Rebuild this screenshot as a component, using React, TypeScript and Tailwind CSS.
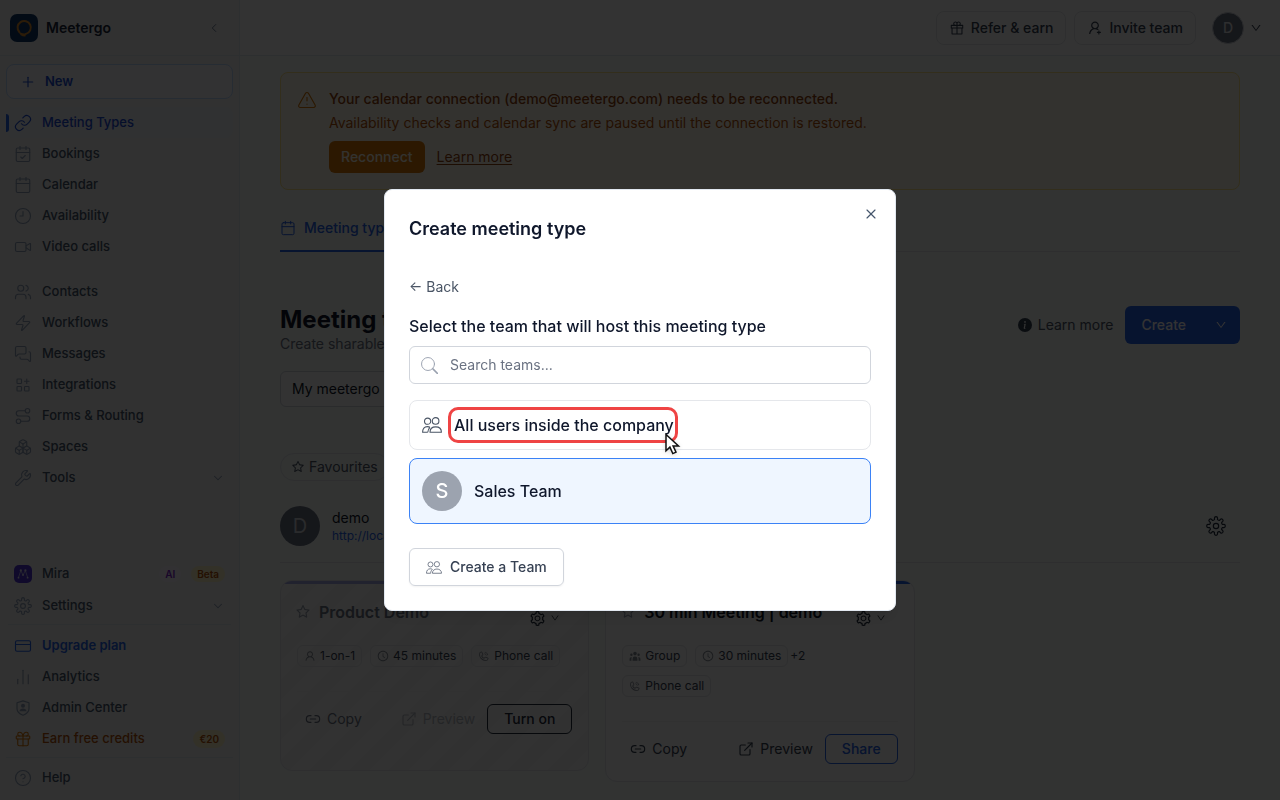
import type { ComponentType, ReactNode } from "react";
import {
  Boxes,
  Calendar,
  CalendarCheck,
  ChartNoAxesColumn,
  ChevronDown,
  ChevronLeft,
  CircleHelp,
  Clock9,
  CreditCard,
  ExternalLink,
  Gift,
  Link,
  Link2,
  MessagesSquare,
  Plus,
  Route,
  TriangleAlert,
  Users,
  Video,
  Wrench,
  X,
  Zap,
} from "lucide-react";
import {
  AiOutlineClockCircle,
  AiOutlineDown,
  AiOutlineGift,
  AiOutlineSetting,
  AiOutlineStar,
  AiOutlineUser,
  AiOutlineUserAdd,
} from "react-icons/ai";
import { BsInfoCircleFill } from "react-icons/bs";
import { HiUserGroup } from "react-icons/hi";
import { PiPhoneCall } from "react-icons/pi";
import { TbApps } from "react-icons/tb";

type IconType = ComponentType<{ className?: string; strokeWidth?: number }>;

function TeamIcon({ className }: { className: string }) {
  return (
    <svg viewBox="0 0 20 16" fill="none" stroke="currentColor" strokeWidth="1.1" className={className} aria-hidden="true">
      <circle cx="5.6" cy="4.2" r="3.1" />
      <circle cx="13.6" cy="3.9" r="3.3" />
      <path d="M8 15.2c0-3.2 2.300-5.300 5.700-5.300s5.700 2.100 5.700 5.300z" strokeLinejoin="round" />
      <path d="M5.800 15.200H.6c0-3.400 1.700-5.600 4.800-5.600 1 0 1.800.2 2.500.7M5.800 15.200c.1-1.800.7-3.400 2.100-4.900" strokeLinejoin="round" />
    </svg>
  );
}

function SearchIcon() {
  return (
    <svg viewBox="0 0 16 16" fill="none" stroke="currentColor" strokeLinecap="round" className="size-[17px]" aria-hidden="true">
      <circle cx="6.600" cy="6.600" r="6.100" strokeWidth="0.9" />
      <path d="M11.200 11.200l4.200 4.200" strokeWidth="1.400" />
    </svg>
  );
}

const cogOutline = Array.from({ length: 8 }, (_, i) => {
  const point = (radius: number, degrees: number) => {
    const a = ((i * 45 + degrees) * Math.PI) / 180;
    return `${(12 + radius * Math.sin(a)).toFixed(2)} ${(12 - radius * Math.cos(a)).toFixed(2)}`;
  };
  return `${i === 0 ? "M" : "L"}${point(8, -13)}L${point(9.8, -11)}Q${point(11.2, -9)} ${point(11.2, 0)}Q${point(11.2, 9)} ${point(9.8, 11)}L${point(8, 13)}Q${point(7, 22.5)} ${point(8, 32)}`;
}).join("");

function Cog({ className, strokeWidth = 1.5 }: { className?: string; strokeWidth?: number }) {
  return (
    <svg viewBox="0 0 24 24" fill="none" stroke="currentColor" strokeWidth={strokeWidth} strokeLinejoin="round" className={className} aria-hidden="true">
      <path d={`${cogOutline}Z`} />
      <circle cx="12" cy="12" r="3.2" />
    </svg>
  );
}

function ShieldUser({ className }: { className?: string }) {
  return (
    <svg viewBox="0 0 24 24" fill="none" stroke="currentColor" strokeWidth="1.500" className={className} aria-hidden="true">
      <path d="M12 2.500l8 2.500v8c0 4-3.300 6.800-8 8.800-4.700-2-8-4.800-8-8.800v-8z" strokeLinejoin="round" />
      <circle cx="12" cy="9" r="2.700" fill="currentColor" stroke="none" />
      <path d="M7.200 16.300c.5-2.500 2.300-3.600 4.800-3.600s4.300 1.100 4.800 3.600z" fill="currentColor" stroke="none" />
    </svg>
  );
}

function Logo() {
  return (
    <svg viewBox="0 0 28 28" className="size-7" aria-hidden="true">
      <rect width="28" height="28" rx="7" fill="#123a6b" />
      <path d="M9.300 18A6.600 6.600 0 1 1 16 19.900" fill="none" stroke="#d98a2b" strokeWidth="2" strokeLinecap="round" />
      <path d="M8.600 17c1.500 1.900 4 2.700 7.600 2.300l-.8 3.200c-3.600.2-6-1.600-6.800-5.500z" fill="#d98a2b" />
    </svg>
  );
}

function MiraIcon() {
  return (
    <svg viewBox="0 0 18 18" className="size-[18px]" aria-hidden="true">
      <rect width="18" height="18" rx="5" fill="#4f35d8" />
      <path d="M4.500 12.500l2.300-7 2.200 4.500 2.400-4.500 2.200 7" fill="none" stroke="#c7c2ee" strokeWidth="0.8" />
      <g fill="#e4e1f8">
        <circle cx="4.500" cy="12.700" r="0.9" />
        <circle cx="6.800" cy="5.400" r="1.100" />
        <circle cx="9" cy="10" r="0.9" />
        <circle cx="11.400" cy="5.400" r="1.100" />
        <circle cx="13.600" cy="12.700" r="0.9" />
      </g>
    </svg>
  );
}

function NavItem({ icon: Icon, label, tone = "text-slate-600", iconTone = "text-slate-400", children }: {
  icon: IconType;
  label: string;
  tone?: string;
  iconTone?: string;
  children?: ReactNode;
}) {
  return (
    <a href="#" className={`flex h-[31px] items-center gap-2.5 rounded-lg pr-2 pl-2 ${tone}`}>
      <span className={`flex w-[18px] justify-center ${iconTone}`}>
        <Icon className="size-[18px]" strokeWidth={1.5} />
      </span>
      <span className="flex-1 whitespace-nowrap">{label}</span>
      {children}
    </a>
  );
}

function Sidebar() {
  return (
    <aside className="flex w-60 shrink-0 flex-col border-r border-slate-200 bg-[#f3f3f4] text-[13px] font-medium">
      <div className="flex h-14 items-center gap-2 border-b border-slate-200 pr-[18px] pl-2.5">
        <Logo />
        <span className="flex-1 text-sm font-semibold text-slate-800">Meetergo</span>
        <button type="button" aria-label="Collapse" className="text-slate-500">
          <ChevronLeft className="size-3.5" strokeWidth={1.5} />
        </button>
      </div>
      <div className="flex flex-1 flex-col px-1.5 pb-[7px]">
        <button type="button" className="mt-2 flex h-[35px] w-full items-center gap-[9px] rounded-lg border border-[#bfdbfe] bg-slate-50 pl-[13px] font-semibold text-[#1d4ed8]">
          <Plus className="size-4" strokeWidth={1.75} />
          New
        </button>
        <nav className="mt-2">
          <div className="flex items-center rounded-lg bg-[#eef2f8]">
            <span className="z-10 -mr-[3px] h-[18px] w-[3px] rounded-r bg-[#2563eb]" />
            <div className="flex-1">
              <NavItem icon={Link} label="Meeting Types" tone="text-[#1d4ed8]" iconTone="text-[#1d4ed8]" />
            </div>
          </div>
          <NavItem icon={CalendarCheck} label="Bookings" />
          <NavItem icon={Calendar} label="Calendar" />
          <NavItem icon={Clock9} label="Availability" />
          <NavItem icon={Video} label="Video calls" />
        </nav>
        <nav className="mt-3.5 mb-6">
          <NavItem icon={Users} label="Contacts" />
          <NavItem icon={Zap} label="Workflows" />
          <NavItem icon={MessagesSquare} label="Messages" />
          <NavItem icon={TbApps} label="Integrations" />
          <NavItem icon={Route} label="Forms & Routing" />
          <NavItem icon={Boxes} label="Spaces" />
          <NavItem icon={Wrench} label="Tools">
            <ChevronDown className="size-3.5 text-slate-400" strokeWidth={1.75} />
          </NavItem>
        </nav>
        <nav className="mt-auto flex flex-col gap-px">
          <NavItem icon={MiraIcon} label="Mira">
            <span className="rounded-full bg-purple-50 px-1.5 text-[10px] leading-4 font-semibold text-[#7e22ce]">AI</span>
            <span className="rounded-full bg-[#fef3c7] px-1.5 text-[10px] leading-4 font-semibold text-[#b45309]">Beta</span>
          </NavItem>
          <NavItem icon={Cog} label="Settings">
            <ChevronDown className="size-3.5 text-slate-400" strokeWidth={1.75} />
          </NavItem>
        </nav>
        <hr className="mx-0.5 mt-[3px] mb-[5px] border-slate-200" />
        <nav>
          <NavItem icon={CreditCard} label="Upgrade plan" tone="text-[#2563eb] font-semibold" iconTone="text-[#2563eb]" />
          <NavItem icon={ChartNoAxesColumn} label="Analytics" />
          <NavItem icon={ShieldUser} label="Admin Center" />
          <NavItem icon={Gift} label="Earn free credits" tone="text-[#b45309]" iconTone="text-[#d97706]">
            <span className="rounded-full bg-[#fef3c7] px-1.5 text-[10px] leading-[18px] font-semibold text-[#b45309]">€20</span>
          </NavItem>
        </nav>
        <hr className="mt-[3px] mb-1 border-slate-200" />
        <NavItem icon={CircleHelp} label="Help" />
      </div>
    </aside>
  );
}

function Header() {
  return (
    <header className="flex h-14 shrink-0 items-center justify-end border-b border-slate-200 bg-white pr-[18px] text-sm font-medium text-gray-700">
      <button type="button" className="mr-2 flex h-[34px] items-center gap-1.5 rounded-lg border border-gray-200 px-3">
        <AiOutlineGift className="size-4" />
        Refer &amp; earn
      </button>
      <button type="button" className="mr-4 flex h-[34px] items-center gap-1.5 rounded-lg border border-gray-200 px-3">
        <AiOutlineUserAdd className="size-4" />
        Invite team
      </button>
      <button type="button" aria-label="Account" className="flex items-center gap-1.5">
        <span className="flex size-8 items-center justify-center rounded-full border border-gray-300 bg-gray-500 text-gray-200">D</span>
        <AiOutlineDown className="size-3" />
      </button>
    </header>
  );
}

function Chip({ icon: Icon, children }: { icon: IconType; children: ReactNode }) {
  return (
    <span className="flex h-[22px] items-center gap-1 rounded-md border border-gray-200 px-1.5 text-xs whitespace-nowrap">
      <Icon className="size-3 opacity-60" />
      {children}
    </span>
  );
}

function CardTitle({ title, tone, starTone }: { title: string; tone: string; starTone: string }) {
  return (
    <div className="flex h-14 items-center gap-2">
      <AiOutlineStar className={`-ml-0.5 size-4 ${starTone}`} />
      <h2 className={`flex-1 text-base font-semibold ${tone}`}>{title}</h2>
      <button type="button" aria-label="Card settings" className="mt-3 mr-3 flex items-center gap-1 text-gray-800">
        <AiOutlineSetting className="size-[17px]" />
        <AiOutlineDown className="size-2.5" />
      </button>
    </div>
  );
}

function Main() {
  return (
    <main className="flex-1 px-10 pt-4 pb-4 text-sm">
      <section className="flex gap-3 rounded-lg border border-[#fde68a] bg-[#fffbeb] px-4 pt-4 pb-4">
        <TriangleAlert className="mt-px size-5 text-[#d97706]" strokeWidth={1.4} />
        <div>
          <p className="font-medium leading-5 text-[#92400e]">Your calendar connection (demo@meetergo.com) needs to be reconnected.</p>
          <p className="mt-1 leading-5 text-[#b45309]">Availability checks and calendar sync are paused until the connection is restored.</p>
          <div className="mt-2 flex items-center gap-3">
            <button type="button" className="h-8 rounded-md bg-[#d97706] px-3 font-medium text-amber-50">Reconnect</button>
            <a href="#" className="text-[#92400e] underline underline-offset-2">Learn more</a>
          </div>
        </div>
      </section>

      <div className="mt-4 flex border-b border-gray-200">
        <button type="button" className="-mb-px flex h-[46px] items-center gap-2 border-b-2 border-[#2563eb] pr-3 font-medium text-[#2563eb]">
          <Calendar className="size-4" strokeWidth={1.5} />
          Meeting types
        </button>
      </div>

      <div className="mt-[54px] flex items-start justify-between">
        <div>
          <h1 className="text-2xl leading-7 font-bold text-gray-900">Meeting types</h1>
          <p className="leading-5 text-gray-500">Create sharable booking pages</p>
        </div>
        <div className="flex items-center gap-3">
          <a href="#" className="flex items-center gap-1.5 text-gray-600">
            <BsInfoCircleFill className="size-3.5 text-gray-700" />
            Learn more
          </a>
          <div className="flex h-[38px] items-center rounded-md bg-[#2563eb] font-medium text-white">
            <button type="button" className="h-full pr-4 pl-4">Create</button>
            <button type="button" aria-label="More create options" className="h-full px-[13px]">
              <AiOutlineDown className="size-3" />
            </button>
          </div>
        </div>
      </div>

      <button type="button" className="mt-[17px] flex h-9 w-56 items-center rounded-md border border-gray-300 bg-white px-[11px] text-gray-900">My meetergo</button>

      <button type="button" className="mt-[46px] flex h-7 items-center gap-1 rounded-full border border-gray-200 px-2.5 text-gray-600">
        <AiOutlineStar className="size-3.5" />
        Favourites
      </button>

      <div className="mt-[25px] flex items-center gap-3 border-b border-gray-200 pb-4">
        <span className="flex size-10 items-center justify-center rounded-full bg-gray-500 text-xl text-gray-300">D</span>
        <div className="flex-1">
          <p className="leading-5 text-gray-900">demo</p>
          <a href="#" className="block text-xs leading-4 text-[#2563eb]">http://localhost/demo</a>
        </div>
        <button type="button" aria-label="Profile settings" className="mr-3.5 text-gray-800">
          <Cog className="size-5" strokeWidth={1.4} />
        </button>
      </div>

      <div className="mt-[17px] grid grid-cols-3 items-start gap-4">
        <article className="relative min-h-[191px] overflow-hidden rounded-xl border border-gray-200 bg-[repeating-linear-gradient(135deg,#f9f9f9_0px,#f9f9f9_14px,#f5f5f5_14px,#f5f5f5_28px)] px-4 pt-[3px] text-gray-500">
          <div className="absolute inset-x-0 top-0 h-[3px] bg-[#a5a8e6]" />
          <CardTitle title="Product Demo" tone="text-gray-500" starTone="text-gray-400" />
          <div className="mt-[5px] flex flex-wrap gap-2 text-gray-700">
            <Chip icon={AiOutlineUser}>1-on-1</Chip>
            <Chip icon={AiOutlineClockCircle}>45 minutes</Chip>
            <Chip icon={PiPhoneCall}>Phone call</Chip>
          </div>
          <div className="mt-6 flex items-center border-t border-gray-100 pt-3">
            <button type="button" className="flex items-center gap-1.5 pl-2"><Link2 className="size-4" strokeWidth={1.75} />Copy</button>
            <button type="button" disabled className="mr-3 ml-auto flex items-center gap-1.5 text-[#b4b8c0]"><ExternalLink className="size-4" strokeWidth={1.75} />Preview</button>
            <button type="button" className="h-[30px] rounded-md border border-gray-800 px-4 font-medium text-gray-800">Turn on</button>
          </div>
        </article>

        <article className="relative overflow-hidden rounded-xl border border-gray-200 bg-[#fcfcfc] px-4 pt-[3px] pb-[17px] text-gray-700">
          <div className="absolute inset-x-0 top-0 h-[3px] bg-[#2563eb]" />
          <CardTitle title="30 min Meeting | demo" tone="text-gray-900" starTone="text-gray-400" />
          <div className="mt-[5px] flex flex-wrap items-center gap-2">
            <Chip icon={HiUserGroup}>Group</Chip>
            <span className="flex items-center gap-0.5 text-xs">
              <Chip icon={AiOutlineClockCircle}>30 minutes</Chip>
              +2
            </span>
            <span className="flex basis-full">
              <Chip icon={PiPhoneCall}>Phone call</Chip>
            </span>
          </div>
          <div className="mt-6 flex items-center border-t border-gray-100 pt-3">
            <button type="button" className="flex items-center gap-1.5 pl-2"><Link2 className="size-4" strokeWidth={1.75} />Copy</button>
            <button type="button" className="mr-3 ml-auto flex items-center gap-1.5"><ExternalLink className="size-4" strokeWidth={1.75} />Preview</button>
            <button type="button" className="h-[30px] rounded-md border border-[#2563eb] px-4 font-medium text-[#2563eb]">Share</button>
          </div>
        </article>
      </div>
    </main>
  );
}

function CreateDialog() {
  return (
    <div className="fixed inset-0 z-20 flex items-center justify-center bg-black/80">
      <div role="dialog" aria-modal="true" aria-labelledby="dialog-title" className="relative w-full max-w-lg rounded-lg border border-slate-200 bg-white p-6 text-slate-900 shadow-lg">
        <h2 id="dialog-title" className="pt-px text-lg leading-7 font-semibold">Create meeting type</h2>
        <button type="button" aria-label="Close" className="absolute top-4 right-4 text-slate-600">
          <X className="size-4" strokeWidth={1.75} />
        </button>
        <button type="button" className="mt-[34px] block text-sm leading-5 text-gray-600">← Back</button>
        <label htmlFor="team-search" className="mt-[17px] block text-base leading-6 font-medium">Select the team that will host this meeting type</label>
        <div className="mt-2 flex h-[38px] items-center gap-3 rounded-md border border-gray-300 px-[11px] text-gray-400">
          <SearchIcon />
          <input id="team-search" type="text" placeholder="Search teams..." className="min-w-0 flex-1 text-sm text-gray-900 outline-none placeholder:text-gray-500" />
        </div>
        <button type="button" className="mt-4 flex h-[50px] w-full items-center gap-3 rounded-lg border border-gray-200 px-3 text-left font-medium">
          <TeamIcon className="h-4 w-5 text-gray-600" />
          <span className="relative">
            All users inside the company
            <span className="absolute -inset-y-1.5 -right-1 -left-1.5 rounded-[10px] border-[3px] border-[#ef4444]" />
            <svg viewBox="0 0 18 24" className="absolute top-5 -right-2 h-6 w-[18px] drop-shadow-sm" aria-hidden="true">
              <path d="M2 1.500v16.300l3.900-3.700 2.900 6.500 3.200-1.400-2.900-6.300h5.400z" fill="#fff" stroke="#111" strokeWidth="1.500" />
            </svg>
          </span>
        </button>
        <button type="button" className="mt-2 flex h-[66px] w-full items-center gap-3 rounded-lg border border-[#3b82f6] bg-[#eff6ff] px-3 text-left font-medium">
          <span className="flex size-10 items-center justify-center rounded-full bg-[#9ca3af] text-xl text-white">S</span>
          Sales Team
        </button>
        <button type="button" className="mt-6 flex h-[38px] items-center gap-2 rounded-md border border-gray-300 px-4 text-sm font-medium text-gray-700 shadow-xs">
          <TeamIcon className="h-[13px] w-4 text-gray-500" />
          Create a Team
        </button>
      </div>
    </div>
  );
}

export default function App() {
  return (
    <div className="flex min-h-screen bg-[#f7fcfa] font-['Inter',sans-serif]">
      <Sidebar />
      <div className="flex min-w-0 flex-1 flex-col">
        <Header />
        <Main />
      </div>
      <CreateDialog />
    </div>
  );
}
